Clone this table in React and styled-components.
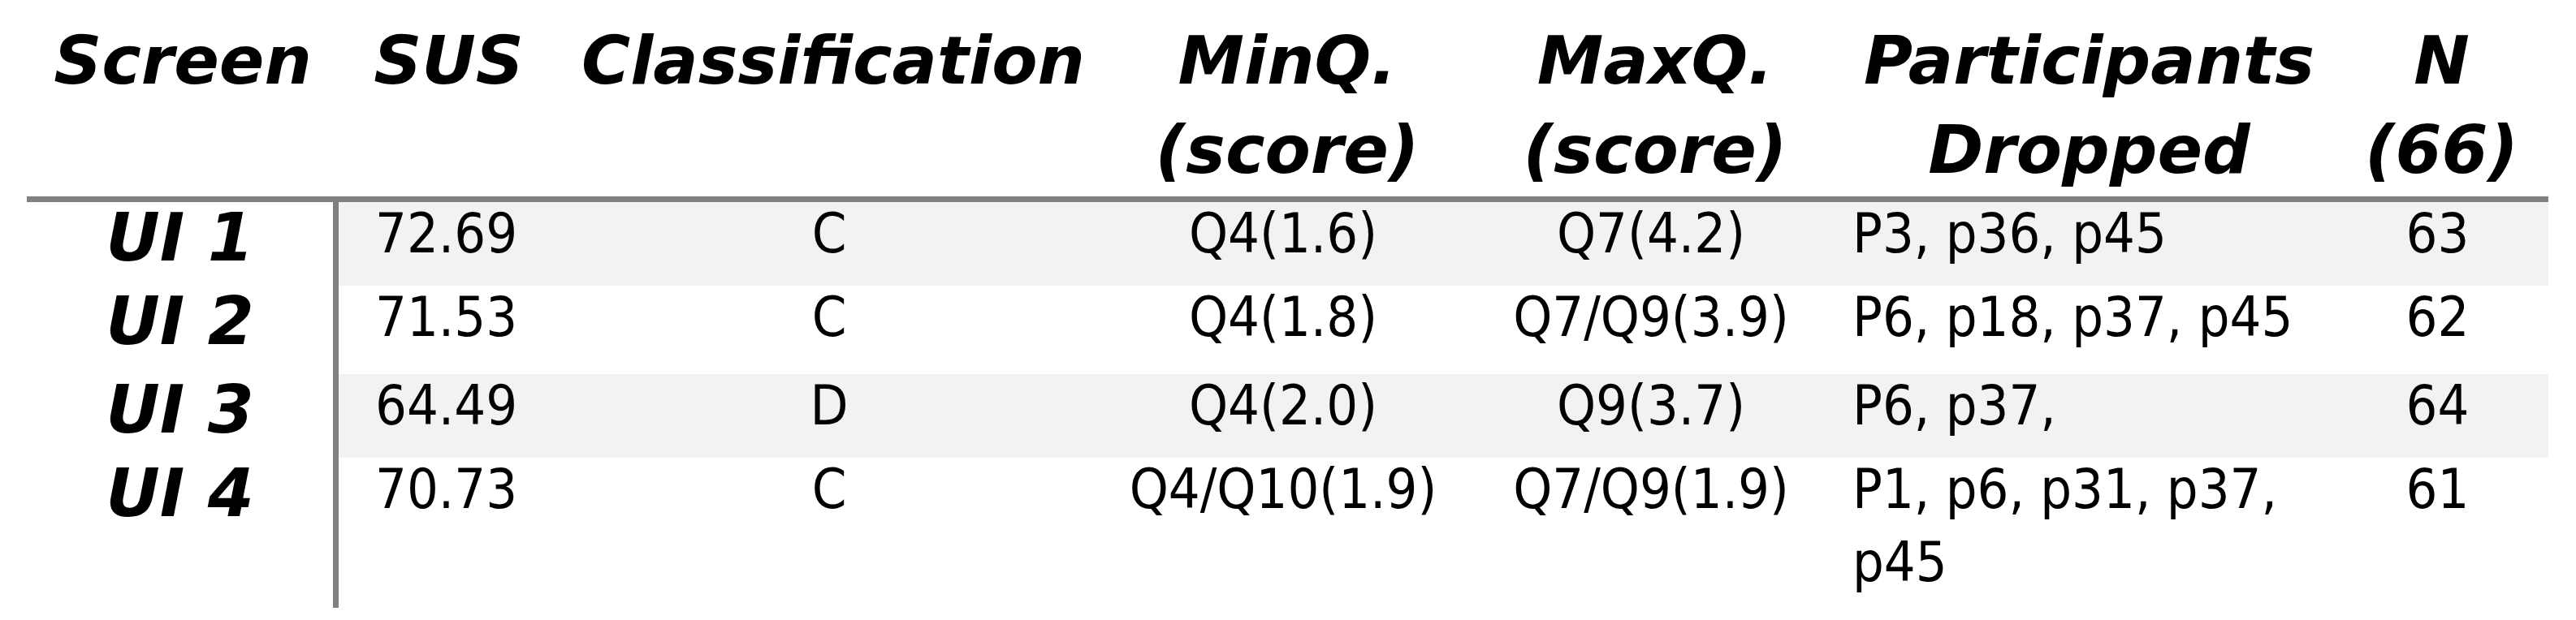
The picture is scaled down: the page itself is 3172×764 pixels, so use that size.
import React from 'react'
import styled, { createGlobalStyle } from 'styled-components'

const GlobalStyle = createGlobalStyle`
  html, body {
    margin: 0;
    padding: 0;
    background: #ffffff;
  }
  body {
    width: 3172px;
    height: 764px;
    overflow: hidden;
  }
`

const COLS = '384px 271px 676px 442px 464px 605px 263px'
const RULE = '#808080'

const Page = styled.div`
    padding-left: 33px;
`

const Table = styled.div`
    width: 3105px;
    color: #000000;
`

const HeaderRow = styled.div`
    display: grid;
    grid-template-columns: ${COLS};
    align-items: start;
    box-sizing: border-box;
    height: 249px;
    padding-top: 20px;
    border-bottom: 7px solid ${RULE};
`

const HeadCell = styled.div`
    font-family: 'DejaVu Sans', 'Liberation Sans', sans-serif;
    font-weight: 700;
    font-style: italic;
    font-size: 82px;
    line-height: 110px;
    text-align: center;
    white-space: nowrap;
`

const HeadLine = styled.span`
    display: block;
`

const BodyRow = styled.div`
    display: grid;
    grid-template-columns: ${COLS};
    align-items: start;
    height: ${({ height }) => height}px;
    background-color: ${({ shaded }) => (shaded ? '#f2f2f2' : '#ffffff')};
`

const LabelCell = styled.div`
    align-self: stretch;
    box-sizing: border-box;
    border-right: 7px solid ${RULE};
    background-color: #ffffff;
    font-family: 'DejaVu Sans', 'Liberation Sans', sans-serif;
    font-weight: 700;
    font-style: italic;
    font-size: 82px;
    line-height: 88px;
    text-align: center;
    white-space: nowrap;
`

const DataCell = styled.div`
    margin-top: -6px;
    padding-left: ${({ pad }) => pad || 0}px;
    padding-right: 10px;
    font-family: 'DejaVu Sans Condensed', 'Liberation Sans', sans-serif;
    font-size: 68px;
    line-height: 90px;
    text-align: ${({ align }) => align};
`

const columns = [
    { key: 'sus', head: ['SUS'], align: 'left', pad: 45 },
    { key: 'cls', head: ['Classification'], align: 'center' },
    { key: 'min', head: ['MinQ.', '(score)'], align: 'center' },
    { key: 'max', head: ['MaxQ.', '(score)'], align: 'center' },
    { key: 'drop', head: ['Participants', 'Dropped'], align: 'left', pad: 11 },
    { key: 'n', head: ['N', '(66)'], align: 'center' },
]

const rows = [
    { label: 'UI 1', height: 103, sus: '72.69', cls: 'C', min: 'Q4(1.6)', max: 'Q7(4.2)', drop: 'P3, p36, p45', n: '63' },
    { label: 'UI 2', height: 109, sus: '71.53', cls: 'C', min: 'Q4(1.8)', max: 'Q7/Q9(3.9)', drop: 'P6, p18, p37, p45', n: '62' },
    { label: 'UI 3', height: 103, sus: '64.49', cls: 'D', min: 'Q4(2.0)', max: 'Q9(3.7)', drop: 'P6, p37,', n: '64' },
    { label: 'UI 4', height: 185, sus: '70.73', cls: 'C', min: 'Q4/Q10(1.9)', max: 'Q7/Q9(1.9)', drop: 'P1, p6, p31, p37, p45', n: '61' },
]

export default function App() {
    return (
        <Page>
            <GlobalStyle />
            <Table>
                <HeaderRow>
                    <HeadCell>Screen</HeadCell>
                    {columns.map((col) => (
                        <HeadCell key={col.key}>
                            {col.head.map((line) => (
                                <HeadLine key={line}>{line}</HeadLine>
                            ))}
                        </HeadCell>
                    ))}
                </HeaderRow>
                {rows.map((row, i) => (
                    <BodyRow key={row.label} height={row.height} shaded={i % 2 === 0}>
                        <LabelCell>{row.label}</LabelCell>
                        {columns.map((col) => (
                            <DataCell key={col.key} align={col.align} pad={col.pad}>
                                {row[col.key]}
                            </DataCell>
                        ))}
                    </BodyRow>
                ))}
            </Table>
        </Page>
    )
}
